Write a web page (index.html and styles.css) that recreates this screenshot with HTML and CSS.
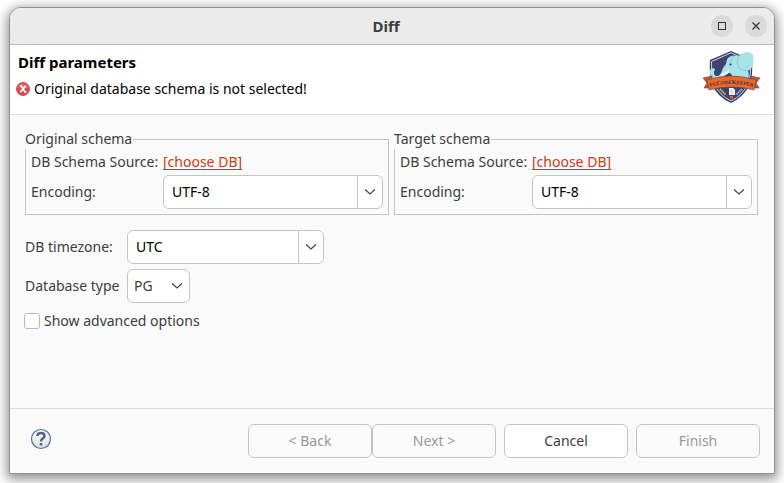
FILE: index.html
```html
<!DOCTYPE html>
<html lang="en">
<head>
<meta charset="utf-8">
<title>Diff</title>
<link rel="stylesheet" href="styles.css">
</head>
<body>
<div class="dialog" role="dialog" aria-labelledby="dialog-title">
  <header class="titlebar">
    <h1 class="titlebar-title" id="dialog-title">Diff</h1>
    <div class="window-controls">
      <button class="window-button" type="button" aria-label="Maximize">
        <svg width="22" height="22" viewBox="0 0 22 22"><rect x="7.5" y="7.5" width="7" height="7" fill="none" stroke="#333"/></svg>
      </button>
      <button class="window-button" type="button" aria-label="Close">
        <svg width="22" height="22" viewBox="0 0 22 22"><path d="M7.5 7.5l7 7M14.5 7.5l-7 7" fill="none" stroke="#333" stroke-width="1.3"/></svg>
      </button>
    </div>
  </header>

  <section class="banner">
    <div class="banner-text">
      <h2 class="banner-title">Diff parameters</h2>
      <p class="banner-message">
        <svg width="14" height="14" viewBox="0 0 14 14" aria-hidden="true"><circle cx="7" cy="7" r="6.5" fill="#d9484b" stroke="#c9565a"/><path d="M1.5 6a5.6 5.6 0 0 1 11 0Q7 8 1.5 6z" fill="#e57c7c" opacity=".6"/><path d="M4 3.8h1.3L9 10.2h1.3M9.8 3.8L4.2 10.2" fill="none" stroke="#fff" stroke-width="1.7"/></svg>
        <span>Original database schema is not selected!</span>
      </p>
    </div>
    <svg class="logo" width="60" height="54" viewBox="0 0 60 54" role="img" aria-label="pgCodeKeeper">
      <path d="M29 1L50 10Q51 25 48 34Q42 47 29 53Q15 47 10 34Q7 24 8 10Z" fill="#394067"/>
      <path d="M29 2.800L48.500 11.500Q49 25 46.500 33Q40 46 29 51Q18 46 11.500 33Q9 24 9.500 11.500Z" fill="#3c446f" stroke="#e3e5ef" stroke-width=".9"/>
      <path d="M24 14Q24 6 32 5.500L37 6Q39 2.500 45 2Q52 2 51.500 9Q52 18 46 21Q48 26 45 32H30Q32 26 28 23Q24 23 21.500 27.500Q18 32 12.500 30Q7.500 27 8 20.500Q9 17.500 12.500 18.500Q14 20 12 21.500Q11.500 26 15 26Q18 26 19.500 22Q21 17 24 14Z" fill="#a8e3e8"/>
      <path d="M37 6.500Q33.500 13 37 17.500Q41 22 46 20.500M32 6Q29 9 28 13" fill="none" stroke="#79c0cf" stroke-width=".8"/>
      <circle cx="28.500" cy="14.500" r="1.100" fill="#333b60"/>
      <path d="M18 24.500Q24 23 26.500 19.500Q28.500 25 19 25.500Z" fill="#fff"/>
      <path d="M1 28L10 26V38L2 38L5 33ZM58 28L49 26V38L57 38L54 33Z" fill="#d8521f" stroke="#454161" stroke-width=".6"/>
      <path d="M5 30Q29 22 54 30L52 40Q29 34 7 40Z" fill="#ee6628" stroke="#55405a" stroke-width=".6"/>
      <path id="ribbon-text" d="M2 38.500Q29.500 29.500 57 38.500" fill="none"/>
      <text class="logo-text" text-anchor="middle"><textPath href="#ribbon-text" startOffset="50%">PG<tspan class="logo-cap">C</tspan>ODE<tspan class="logo-cap">K</tspan>EEPER</textPath></text>
      <path d="M27 38h4l2 2v5h-6z" fill="#fff"/><path d="M28 41h3M28 43h4" stroke="#8990a8" stroke-width=".6"/>
      <path d="M18 39l5.500 5.500" stroke="#e2b64d" stroke-width="1.800" stroke-dasharray="1.500 .6"/><path d="M40 39l-5.500 5.500" stroke="#81c4d5" stroke-width="1.800" stroke-dasharray="1.500 .6"/>
      <rect x="28" y="46" width="3" height="2.500" fill="#e76027"/>
    </svg>
  </section>

  <main class="content">
    <div class="schemas">
      <fieldset class="schema">
        <legend>Original schema</legend>
        <span>DB Schema Source:</span>
        <a href="#original">[choose DB]</a>
        <label for="original-encoding">Encoding:</label>
        <div class="combo">
          <select id="original-encoding"><option>UTF-8</option></select>
          <span class="combo-arrow"><svg width="12" height="8" viewBox="0 0 12 8"><path d="M1 1.500l5 4.500 5-4.500" fill="none" stroke="#444" stroke-width="1.2"/></svg></span>
        </div>
      </fieldset>
      <fieldset class="schema">
        <legend>Target schema</legend>
        <span>DB Schema Source:</span>
        <a href="#target">[choose DB]</a>
        <label for="target-encoding">Encoding:</label>
        <div class="combo">
          <select id="target-encoding"><option>UTF-8</option></select>
          <span class="combo-arrow"><svg width="12" height="8" viewBox="0 0 12 8"><path d="M1 1.500l5 4.500 5-4.500" fill="none" stroke="#444" stroke-width="1.2"/></svg></span>
        </div>
      </fieldset>
    </div>

    <div class="options">
      <label for="timezone">DB timezone:</label>
      <div class="combo">
        <select id="timezone"><option>UTC</option></select>
        <span class="combo-arrow"><svg width="12" height="8" viewBox="0 0 12 8"><path d="M1 1.500l5 4.500 5-4.500" fill="none" stroke="#444" stroke-width="1.2"/></svg></span>
      </div>
      <label for="database-type">Database type</label>
      <div class="combo combo-plain">
        <select id="database-type"><option>PG</option></select>
        <span class="combo-arrow"><svg width="12" height="8" viewBox="0 0 12 8"><path d="M1 1.500l5 4.500 5-4.500" fill="none" stroke="#444" stroke-width="1.2"/></svg></span>
      </div>
    </div>

    <label class="check"><input type="checkbox"> Show advanced options</label>
  </main>

  <footer class="footer">
    <button class="help" type="button" aria-label="Help">
      <svg width="22" height="22" viewBox="0 0 22 22"><defs><linearGradient id="help-fill" x2="0" y2="1"><stop stop-color="#fff"/><stop offset="1" stop-color="#dedede"/></linearGradient></defs><circle cx="11" cy="11" r="9.500" fill="url(#help-fill)" stroke="#5b6f91" stroke-width="1.200"/><path d="M7.500 8Q7.500 5 11 5T14.500 8Q14.500 9.500 12.500 10.800Q11 11.800 11 13.500" fill="none" stroke="#4f6288" stroke-width="2.400"/><rect x="9.700" y="15" width="2.600" height="2.400" rx=".6" fill="#4f6288"/></svg>
    </button>
    <div class="actions">
      <div class="steps">
        <button class="button" type="button" disabled>&lt; Back</button>
        <button class="button" type="button" disabled>Next &gt;</button>
      </div>
      <button class="button" type="button">Cancel</button>
      <button class="button" type="button" disabled>Finish</button>
    </div>
  </footer>
</div>
</body>
</html>
```
FILE: styles.css
```css
* {
  box-sizing: border-box;
}

body {
  margin: 0;
  min-height: 100vh;
  padding: 7px 9px 9px;
  display: flex;
  background: #fff;
  color: #3d3d3d;
  font: 14px/20px "Noto Sans", "Open Sans", sans-serif;
}

button,
select {
  font: inherit;
  color: inherit;
}

.dialog {
  flex: 1;
  min-width: 0;
  display: flex;
  flex-direction: column;
  background: #fafafa;
  border: 1px solid #929292;
  border-radius: 12px 12px 0 0;
  overflow: hidden;
  box-shadow: 0 3px 12px 2px rgba(0, 0, 0, 0.45);
}

.titlebar {
  height: 37px;
  display: grid;
  grid-template-columns: 1fr auto 1fr;
  align-items: center;
  padding: 0 7px;
  background: #ebebeb;
  border-bottom: 1px solid #b8b8b8;
}

.titlebar-title {
  grid-column: 2;
  margin: 0;
  padding-right: 12px;
  font-size: 15px;
  font-weight: 700;
}

.window-controls {
  display: flex;
  justify-content: flex-end;
  gap: 12px;
}

.window-button {
  width: 22px;
  height: 22px;
  padding: 0;
  border: 0;
  border-radius: 50%;
  background: #dadada;
}

.window-button svg,
.help svg {
  display: block;
}

.banner {
  min-height: 70px;
  display: flex;
  justify-content: space-between;
  padding: 5px 12px 0 6px;
  background: #fff;
  border-bottom: 1px solid #dcdcdc;
  color: #000;
}

.banner-title {
  margin: 2px 2px 7px;
  font-size: 15px;
  font-weight: 700;
}

.banner-message {
  margin: 0;
  display: flex;
  align-items: center;
  gap: 4px;
}

.logo-text {
  font: bold 5px "Liberation Serif", serif;
  fill: #333650;
}

.logo-cap {
  font-size: 6px;
}

.content {
  flex: 1;
  padding: 14px 16px 0 15px;
}

.schemas {
  display: grid;
  grid-template-columns: 1fr 1fr;
  gap: 5px;
}

.schema {
  min-width: 0;
  margin: 0;
  padding: 3px 5px 5px;
  border: 1px solid #c4c4c4;
  display: grid;
  grid-template-columns: 128px 1fr;
  column-gap: 4px;
  row-gap: 3px;
  align-items: center;
}

.schema legend {
  margin-left: -6px;
  padding: 0 1px 0 0;
  line-height: 20px;
  background: #fafafa;
}

.schema a {
  justify-self: start;
  color: #c34113;
  text-underline-offset: 2px;
}

.combo {
  height: 34px;
  display: grid;
  grid-template-columns: 1fr 25px;
  background: #fff;
  border: 1px solid #c4c4c4;
  border-radius: 6px;
  color: #000;
}

.combo select {
  grid-area: 1 / 1 / 2 / 3;
  min-width: 0;
  padding: 0 32px 0 8px;
  border: 0;
  border-radius: 6px;
  background: transparent;
  appearance: none;
}

.combo-arrow {
  grid-area: 1 / 2;
  display: flex;
  align-items: center;
  justify-content: center;
  border-left: 1px solid #c4c4c4;
  pointer-events: none;
}

.options {
  margin-top: 15px;
  display: grid;
  grid-template-columns: 97px 197px;
  column-gap: 5px;
  row-gap: 5px;
  align-items: center;
}

.options label {
  white-space: nowrap;
}

.combo-plain {
  width: 63px;
  color: #3d3d3d;
}

.combo-plain select {
  padding: 0 20px 0 6px;
}

.combo-plain .combo-arrow {
  border-left: 0;
}

.check {
  margin: 8px 0 0 -1px;
  display: flex;
  align-items: center;
  gap: 4px;
}

.check input {
  appearance: none;
  width: 16px;
  height: 16px;
  margin: 0;
  background: #fff;
  border: 1px solid #b8b8b8;
  border-radius: 3px;
}

.check input:checked {
  background: #e95420;
}

.footer {
  display: flex;
  justify-content: space-between;
  align-items: center;
  padding: 15px 14px 15px 20px;
  border-top: 1px solid #dcdcdc;
}

.help {
  padding: 0 0 4px;
  border: 0;
  background: none;
}

.actions {
  display: flex;
  gap: 8px;
}

.steps {
  display: flex;
}

.button {
  width: 124px;
  height: 34px;
  padding: 0;
  border: 1px solid #c4c4c4;
  border-radius: 6px;
  background: #fff;
}

.button:disabled {
  background: #fbfbfb;
  color: #999;
}
```
